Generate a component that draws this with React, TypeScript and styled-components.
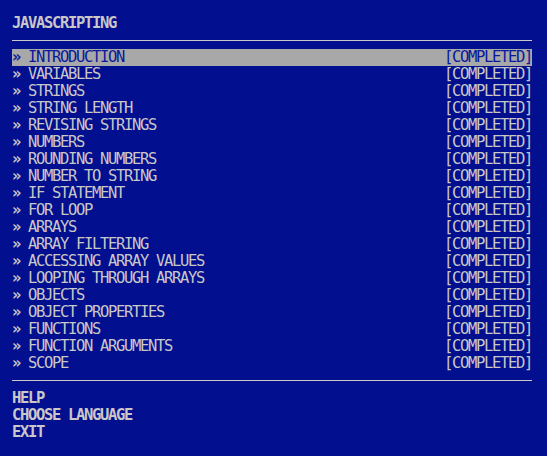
import React from "react";
import styled, { createGlobalStyle } from "styled-components";

const Global = createGlobalStyle`
  html, body {
    margin: 0;
    padding: 0;
    background: #020f8e;
  }
  body {
    width: 547px;
    height: 456px;
    overflow: hidden;
  }
`;

const Screen = styled.div`
  box-sizing: border-box;
  width: 547px;
  height: 456px;
  padding: 15px 15px 0 12px;
  background: #020f8e;
  color: #c8c8c8;
  font-family: "DejaVu Sans Mono", "Liberation Mono", monospace;
  font-size: 15.5px;
  line-height: 17px;
  letter-spacing: -1.33px;
  display: flex;
  flex-direction: column;
`;

const Title = styled.div`
  font-weight: bold;
  height: 17px;
`;

const Rule = styled.hr<{ $top: number; $bottom: number }>`
  border: none;
  height: 1px;
  background: #c8c8c8;
  margin: ${(p) => p.$top}px 0 ${(p) => p.$bottom}px 0;
`;

const List = styled.ul`
  list-style: none;
  margin: 0;
  padding: 0;
  display: flex;
  flex-direction: column;
`;

const Row = styled.li<{ $active?: boolean }>`
  display: flex;
  justify-content: space-between;
  height: 17px;
  white-space: pre;
  background: ${(p) => (p.$active ? "#a8a8a8" : "transparent")};
  color: ${(p) => (p.$active ? "#0a189c" : "#c8c8c8")};
`;

const Marker = styled.span`
  font-weight: bold;
`;

const Status = styled.span``;

const Footer = styled.div`
  display: flex;
  flex-direction: column;
  font-weight: bold;
`;

const FooterItem = styled.div`
  height: 17px;
`;

const lessons = [
  "INTRODUCTION",
  "VARIABLES",
  "STRINGS",
  "STRING LENGTH",
  "REVISING STRINGS",
  "NUMBERS",
  "ROUNDING NUMBERS",
  "NUMBER TO STRING",
  "IF STATEMENT",
  "FOR LOOP",
  "ARRAYS",
  "ARRAY FILTERING",
  "ACCESSING ARRAY VALUES",
  "LOOPING THROUGH ARRAYS",
  "OBJECTS",
  "OBJECT PROPERTIES",
  "FUNCTIONS",
  "FUNCTION ARGUMENTS",
  "SCOPE",
];

export default function App() {
  return (
    <>
      <Global />
      <Screen>
        <Title>JAVASCRIPTING</Title>
        <Rule $top={8} $bottom={8} />
        <List>
          {lessons.map((name, i) => (
            <Row key={name} $active={i === 0}>
              <span>
                <Marker>»</Marker> {name}
              </span>
              <Status>[COMPLETED]</Status>
            </Row>
          ))}
        </List>
        <Rule $top={8} $bottom={9} />
        <Footer>
          <FooterItem>HELP</FooterItem>
          <FooterItem>CHOOSE LANGUAGE</FooterItem>
          <FooterItem>EXIT</FooterItem>
        </Footer>
      </Screen>
    </>
  );
}
